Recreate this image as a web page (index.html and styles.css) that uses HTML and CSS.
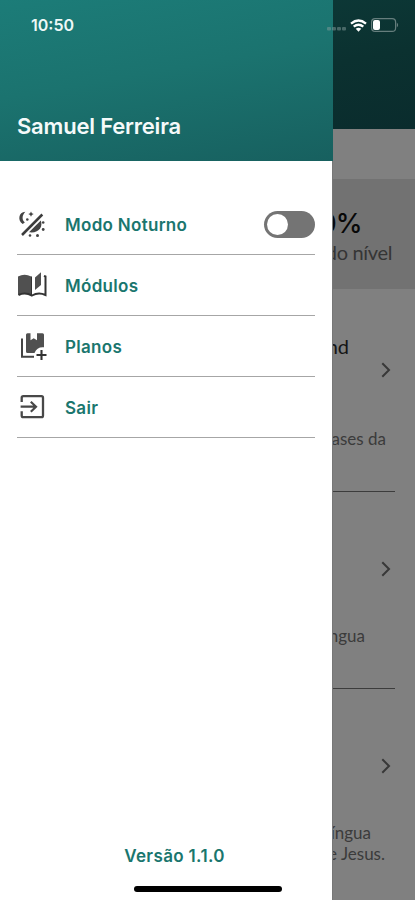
FILE: index.html
```html
<!DOCTYPE html>
<html lang="pt-BR">
<head>
  <meta charset="UTF-8">
  <meta name="viewport" content="width=device-width, initial-scale=1.0">
  <title>Menu</title>
  <link rel="stylesheet" href="styles.css">
</head>
<body>
  <div class="screen">
    <!-- Page behind the drawer -->
    <main class="page">
      <div class="page-header"></div>
      <div class="progress">
        <strong>0%</strong>
        <span>do nível</span>
      </div>
      <section class="lesson first">
        <h3>and</h3>
        <svg class="chevron" viewBox="0 0 10 16"><path d="M1.300 1.300 8 8l-6.700 6.700"/></svg>
        <p class="desc">bases da</p>
      </section>
      <section class="lesson second">
        <svg class="chevron" viewBox="0 0 10 16"><path d="M1.300 1.300 8 8l-6.700 6.700"/></svg>
        <p class="desc">língua</p>
      </section>
      <section class="lesson third">
        <svg class="chevron" viewBox="0 0 10 16"><path d="M1.300 1.300 8 8l-6.700 6.700"/></svg>
        <p class="desc">língua</p>
        <p class="desc last">de Jesus.</p>
      </section>
    </main>

    <!-- Drawer -->
    <aside class="drawer">
      <header class="drawer-header">
        <h2>Samuel Ferreira</h2>
      </header>
      <nav class="menu">
        <div class="menu-item">
          <svg class="icon" viewBox="0 0 30 30">
            <path d="M5 26 25.300 5.500" stroke="#3c3c3c" stroke-width="2.500" fill="none"/>
            <path d="M8.300 2.800C1.500 3 .3 11.800 5.700 15L7.800 13.400C4.800 11 4.800 6.500 8.300 2.800z" fill="#444"/>
            <path d="M12 23.300 23.800 11.500C26 17.500 22.500 24.500 12 23.300z" fill="#444"/>
            <g fill="#444">
              <path d="m14 2.600.9 1.700 1.800.8-1.800.9-.9 1.700-.9-1.700-1.800-.9 1.800-.8z"/>
              <circle cx="10.300" cy="10.500" r="1.300"/>
              <circle cx="26.200" cy="13.500" r="1.300"/>
              <circle cx="26.200" cy="20.500" r="1.400"/>
              <circle cx="20.500" cy="26.500" r="1.500"/>
              <circle cx="13" cy="26.500" r="1.300"/>
            </g>
          </svg>
          <span>Modo Noturno</span>
          <div class="switch"></div>
        </div>
        <div class="menu-item">
          <svg class="icon" viewBox="0 0 30 30">
            <path d="M1 6.500Q7.500 3 14.300 6.500V25Q7.500 21.500 1 25z" fill="#505050"/>
            <path d="M1.500 25Q8 21.800 15 25.500 21.500 21.800 28.500 25V6.500L27 5.800" stroke="#333" stroke-width="2" fill="none"/>
            <path d="M14.500 6.500V25" stroke="#333" stroke-width="1"/>
            <path d="M18 7.500 24 2.200V15L18 20z" fill="#505050"/>
          </svg>
          <span>Módulos</span>
        </div>
        <div class="menu-item">
          <svg class="icon" viewBox="0 0 30 30">
            <path d="M5 7.500V25.700H17" stroke="#444" stroke-width="2" fill="none"/>
            <path d="M10.500 2.300H13.500V9.300L16.700 7.300 20 9.300V2.300H25.500Q27 2.300 27 3.800V16.200Q20 15.500 17.500 22H10.500Q9 22 9 20.500V3.800Q9 2.300 10.500 2.300z" fill="#505050"/>
            <path d="M24.500 19V29M19.500 24H29.500" stroke="#333" stroke-width="2.100"/>
          </svg>
          <span>Planos</span>
        </div>
        <div class="menu-item">
          <svg class="icon" viewBox="0 0 30 30" fill="none" stroke="#484848">
            <path d="M4.700 10V5.800Q4.700 4.200 6.300 4.200H24.500Q26 4.200 26 5.800V23.500Q26 25.200 24.500 25.200H6.300Q4.700 25.200 4.700 23.500V19.300" stroke-width="2.300"/>
            <path d="M3.600 14.700H18.500M13.800 9.700 19 14.700 13.800 19.700" stroke-width="2.200"/>
          </svg>
          <span>Sair</span>
        </div>
      </nav>
      <footer class="drawer-footer">Versão 1.1.0</footer>
    </aside>

    <!-- Status bar -->
    <div class="status-bar">
      <span class="time">10:50</span>
      <div class="status-icons">
        <svg width="19" height="4" viewBox="0 0 19 4" fill="#849c9b" opacity=".5">
          <rect width="4" height="3.500" rx="1"/><rect x="5" width="4" height="3.500" rx="1"/><rect x="10" width="4" height="3.500" rx="1"/><rect x="15" width="4" height="3.500" rx="1"/>
        </svg>
        <svg class="wifi" width="17" height="13" viewBox="0 0 17 13" fill="none" stroke="#fff" stroke-width="2.300">
          <path d="M1 4.600Q8.500-1.700 16 4.600M3.700 7.700Q8.500 3.700 13.300 7.700"/>
          <path d="M8.500 12.700 5.700 9.800Q8.500 7.500 11.300 9.800z" fill="#fff" stroke="none"/>
        </svg>
        <svg class="battery" width="28" height="14" viewBox="0 0 28 14">
          <rect x=".6" y=".6" width="24" height="12.800" rx="3.500" fill="none" stroke="#667e7d" stroke-width="1.200"/>
          <rect x="2" y="2" width="7" height="10" rx="2" fill="#fff"/>
          <path d="M25.800 4.500Q28.500 7 25.800 9.500z" fill="#667e7d"/>
        </svg>
      </div>
    </div>
    <div class="home-indicator"></div>
  </div>
</body>
</html>
```

FILE: styles.css
```css
:root {
  --teal: #1a766e;
  --line: #a6a6a6;
  --dim: #808080;
}
* {
  box-sizing: border-box;
}
body {
  margin: 0;
  font-family: Inter, "Liberation Sans", sans-serif;
}
h2, h3, p {
  margin: 0;
}
.screen {
  position: relative;
  width: 415px;
  height: 900px;
  overflow: hidden;
  background: var(--dim);
}
/* Page behind the drawer */
.page {
  display: flex;
  flex-direction: column;
  height: 100%;
  text-align: right;
  font-family: Lato, sans-serif;
}
.page-header {
  height: 129px;
  margin-bottom: 50px;
  flex: none;
  background: linear-gradient(170deg, #0d3d3b, #0b3130 60%, #0a2c2d);
}
.progress {
  display: flex;
  flex-direction: column;
  height: 110px;
  flex: none;
  padding: 28px 23px 0 0;
  background: #727272;
}
.progress strong {
  margin-right: 30px;
  font: 500 27px/33px Inter, sans-serif;
  letter-spacing: -0.7px;
  color: #080808;
}
.progress span {
  font-size: 20px;
  line-height: 25px;
  letter-spacing: -0.35px;
  color: #353535;
}
.lesson {
  display: flex;
  flex-direction: column;
  align-items: flex-end;
  flex: none;
  height: 197px;
  margin-right: 20px;
  padding-top: 69px;
  border-bottom: 1px solid #3c3c3c;
}
.lesson.first {
  height: 203px;
  padding-top: 45px;
}
.lesson.third {
  border-bottom: none;
}
.lesson h3 {
  height: 28px;
  margin-right: 46px;
  font-size: 20px;
  font-weight: 400;
  line-height: 24px;
  color: #151515;
}
.chevron {
  width: 10px;
  height: 16px;
  margin-right: 4px;
  fill: none;
  stroke: #383838;
  stroke-width: 2;
}
.desc {
  margin: 48px 30px 0 0;
  font-size: 17px;
  line-height: 21px;
  color: #3b3b3b;
}
.first .desc {
  margin: 50px 9px 0 0;
}
.third .desc {
  margin-right: 24px;
}
.third .desc.last {
  margin: 0 10px 0 0;
}
/* Drawer */
.drawer {
  position: absolute;
  top: 0;
  left: 0;
  display: flex;
  flex-direction: column;
  width: 333px;
  height: 100%;
  background: #fff;
  border-right: 1px solid #777;
}
.drawer-header {
  display: flex;
  align-items: flex-end;
  width: 333px;
  height: 161px;
  padding: 0 17px 21px;
  background: linear-gradient(170deg, #1c7c78, #1b736f 45%, #17605f);
}
.drawer-header h2 {
  font-size: 22px;
  font-weight: 600;
  line-height: 27px;
  letter-spacing: -0.2px;
  color: #f5fafa;
}
.menu {
  padding: 33px 17px 0;
}
.menu-item {
  display: flex;
  align-items: center;
  height: 61px;
  border-bottom: 1px solid var(--line);
  color: var(--teal);
  font-size: 17px;
  font-weight: 600;
  letter-spacing: 0.3px;
}
.menu-item span {
  padding-top: 1px;
}
.icon {
  width: 30px;
  height: 30px;
  margin-right: 18px;
}
.switch {
  width: 51px;
  height: 27px;
  margin-left: auto;
  padding: 3px;
  border-radius: 14px;
  background: #747474;
}
.switch::before {
  content: "";
  display: block;
  width: 21px;
  height: 21px;
  border-radius: 50%;
  background: #fff;
}
.drawer-footer {
  margin-top: auto;
  margin-bottom: 33px;
  padding-left: 17px;
  text-align: center;
  font-size: 17px;
  font-weight: 600;
  line-height: 21px;
  letter-spacing: 0.35px;
  color: var(--teal);
}
/* Status bar */
.status-bar {
  position: absolute;
  top: 0;
  left: 0;
  display: flex;
  justify-content: space-between;
  align-items: center;
  width: 100%;
  height: 50px;
  padding: 0 16px 0 31px;
  color: #eef8f7;
}
.time {
  font-size: 16px;
  font-weight: 600;
}
.status-icons {
  display: flex;
  align-items: center;
}
.status-icons svg:first-child {
  margin-top: 8px;
}
.wifi {
  margin: 0 4px 0 4px;
}
.home-indicator {
  position: absolute;
  bottom: 8px;
  left: 134px;
  width: 148px;
  height: 6px;
  border-radius: 3px;
  background: #000;
}
```
